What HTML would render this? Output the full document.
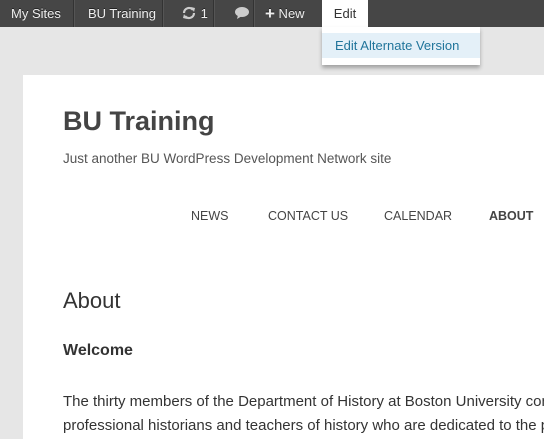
<!DOCTYPE html>
<html><head><style>
html,body{margin:0;width:544px;height:439px;overflow:hidden}
body{background:#e6e6e6;font-family:"Liberation Sans",sans-serif;position:relative}
#w{position:absolute;left:0;top:0;width:544px;height:439px;overflow:hidden}
.bar{position:absolute;left:0;top:0;width:544px;height:27px;background:#464646;}
.bar span{position:absolute;top:0;height:27px;line-height:27px;font-size:13px;color:#eee;text-shadow:0 -1px 0 #222}
.div{position:absolute;top:0;width:1px;height:27px;background:#333;border-right:1px solid #555}
.edit{position:absolute;left:322px;top:0;width:46px;height:27px;background:#fff;color:#333;font-size:13px;line-height:27px;text-align:center}
.dd{position:absolute;left:322px;top:27px;width:158px;height:38px;background:#fff;box-shadow:0 3px 4px rgba(0,0,0,.3)}
.dd div{position:absolute;left:0;top:6px;width:158px;height:25px;background:#e4f0f8;color:#21759b;font-size:13px;line-height:25px;text-indent:13px}
.card{position:absolute;left:23px;top:75px;width:521px;height:364px;background:#fff}
.t{position:absolute;color:#444;white-space:nowrap}
</style></head><body><div id="w">
<div class="bar">
<span style="left:11px">My Sites</span><div class="div" style="left:73px"></div>
<span style="left:88px">BU Training</span><div class="div" style="left:162px"></div>
<span style="left:181px"><svg width="16" height="14" viewBox="0 0 16 14" style="vertical-align:-2px"><path d="M3 7a5 5 0 0 1 9-3" stroke="#ccc" stroke-width="2.2" fill="none"/><path d="M13 7a5 5 0 0 1-9 3" stroke="#ccc" stroke-width="2.2" fill="none"/><path d="M10 1l4 1-1 4z M6 13l-4-1 1-4z" fill="#ccc"/></svg> 1</span><div class="div" style="left:213px"></div>
<span style="left:234px"><svg width="16" height="14" viewBox="0 0 16 14" style="vertical-align:-2px"><ellipse cx="8" cy="6" rx="7" ry="5" fill="#ccc"/><path d="M4 9l-1 4 5-3z" fill="#ccc"/></svg></span><div class="div" style="left:253px"></div>
<span style="left:265px"><b style="font-size:17px;vertical-align:-1px">+</b> New</span>
</div>
<div class="edit">Edit</div>
<div class="dd"><div>Edit Alternate Version</div></div>
<div class="card"></div>
<div class="t" style="left:63px;top:106px;font-size:27px;font-weight:bold;color:#444">BU Training</div>
<div class="t" style="left:63px;top:151px;font-size:13.5px;color:#555">Just another BU WordPress Development Network site</div>
<div class="t" style="left:191px;top:209px;font-size:12.5px">NEWS</div>
<div class="t" style="left:268px;top:209px;font-size:12.5px">CONTACT US</div>
<div class="t" style="left:384px;top:209px;font-size:12.5px">CALENDAR</div>
<div class="t" style="left:489px;top:209px;font-size:12.5px;font-weight:bold">ABOUT</div>
<div class="t" style="left:63px;top:288px;font-size:22px;color:#333">About</div>
<div class="t" style="left:63px;top:342px;font-size:16px;font-weight:bold;color:#333">Welcome</div>
<div class="t" style="left:63px;top:393px;font-size:15px;color:#333">The thirty members of the Department of History at Boston University comprise</div>
<div class="t" style="left:63px;top:417px;font-size:15px;color:#333">professional historians and teachers of history who are dedicated to the pursuit</div>
</div></body></html>
